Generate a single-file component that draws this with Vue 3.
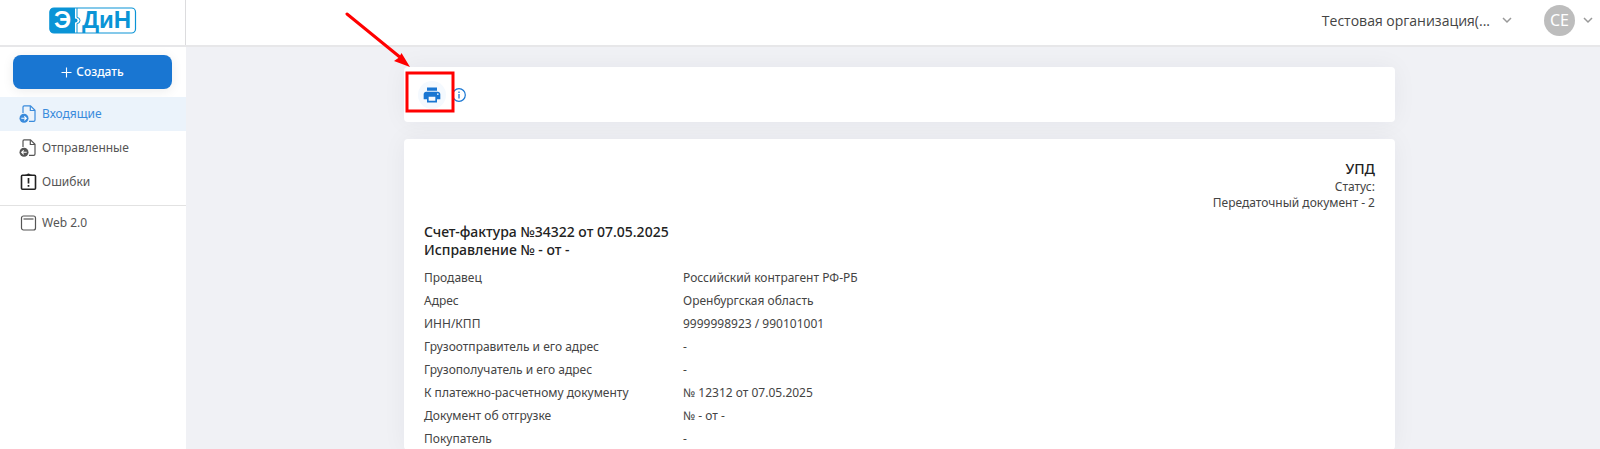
<script setup>
const navItems = [
  { label: 'Входящие', icon: 'in', active: true },
  { label: 'Отправленные', icon: 'out', active: false },
  { label: 'Ошибки', icon: 'error', active: false },
]

const rows = [
  ['Продавец', 'Российский контрагент РФ-РБ'],
  ['Адрес', 'Оренбургская область'],
  ['ИНН/КПП', '9999998923 / 990101001'],
  ['Грузоотправитель и его адрес', '-'],
  ['Грузополучатель и его адрес', '-'],
  ['К платежно-расчетному документу', '№ 12312 от 07.05.2025'],
  ['Документ об отгрузке', '№ - от -'],
  ['Покупатель', '-'],
]
</script>

<template>
  <div class="app">
    <header class="header">
      <a class="brand" href="#" aria-label="ЭДиН">
        <svg class="logo" width="88" height="28" viewBox="0 0 88 28">
          <rect x="1" y="1" width="85.5" height="25" rx="4" fill="#fff" stroke="#0a94d6" stroke-width="1.2" />
          <path d="M5 1H26V26H5A4.500 4.500 0 0 1 0.500 22V5A4.500 4.500 0 0 1 5 1Z" fill="#0a94d6" />
          <path d="M28 1V10.500A2.800 2.800 0 1 1 28 16.500V26" fill="none" stroke="#0a94d6" stroke-width="1" />
          <path d="M25.500 11.800A2 2 0 1 1 25.500 15.200Z" fill="#0a94d6" />
          <text x="5" y="21" class="logo-text" fill="#fff">Э</text>
          <text x="33" y="21" class="logo-text" fill="#0a94d6">ДиН</text>
        </svg>
      </a>
      <div class="account">
        <button class="org" type="button">
          <span>Тестовая организация(...</span>
          <svg width="10" height="7" viewBox="0 0 10 7"><path d="M1 1L5 5L9 1" class="chevron" /></svg>
        </button>
        <button class="user" type="button">
          <span class="avatar">CE</span>
          <svg width="10" height="7" viewBox="0 0 10 7"><path d="M1 1L5 5L9 1" class="chevron" /></svg>
        </button>
      </div>
    </header>

    <div class="body">
      <aside class="sidebar">
        <button class="create" type="button">
          <svg width="11" height="11" viewBox="0 0 11 11"><path d="M5.500 0.500V10.500M0.500 5.500H10.500" stroke="#fff" stroke-width="1.100" /></svg>
          <span>Создать</span>
        </button>
        <nav class="nav">
          <a v-for="item in navItems" :key="item.label" href="#" :class="['nav-item', { active: item.active }]">
            <svg v-if="item.icon === 'error'" class="dark" width="18" height="18" viewBox="0 0 18 18">
              <rect x="2.500" y="2.300" width="14" height="14" rx="1" fill="none" stroke="currentColor" stroke-width="1.600" />
              <path d="M6.500 3V1.500H8A1.600 1.600 0 0 1 11 1.500H12.500V3Z" fill="currentColor" />
              <path d="M9.500 5V10.500M9.500 12V13.700" stroke="currentColor" stroke-width="1.700" />
            </svg>
            <svg v-else width="18" height="18" viewBox="0 0 18 18">
              <path d="M4 8V2Q4 0.800 5.200 0.800H11.500L16 5.300V15Q16 16.300 14.700 16.300H10" fill="none" stroke="currentColor" stroke-width="1.200" />
              <path d="M11.300 1V5.500H16" fill="none" stroke="currentColor" stroke-width="1.200" />
              <circle cx="5" cy="13.300" r="4.500" fill="currentColor" />
              <path v-if="item.icon === 'in'" d="M2.300 13.300H7.300M5.300 11.300L7.300 13.300L5.300 15.300" fill="none" stroke="#fff" stroke-width="1.100" />
              <path v-else d="M7.700 13.300H2.700M4.700 11.300L2.700 13.300L4.700 15.300" fill="none" stroke="#fff" stroke-width="1.100" />
            </svg>
            <span>{{ item.label }}</span>
          </a>
        </nav>
        <nav class="nav secondary">
          <a href="#" class="nav-item">
            <svg width="18" height="18" viewBox="0 0 18 18">
              <rect x="2.500" y="2" width="14" height="14" rx="2" fill="none" stroke="currentColor" stroke-width="1.200" />
              <path d="M4.500 5H14.500" stroke="currentColor" stroke-width="1.200" />
            </svg>
            <span>Web 2.0</span>
          </a>
        </nav>
      </aside>

      <main class="main">
        <section class="card toolbar">
          <button class="tool print" type="button" aria-label="Печать">
            <svg width="20" height="20" viewBox="0 0 24 24">
              <path fill="#1976d2" d="M19 8H5c-1.660 0-3 1.340-3 3v6h4v4h12v-4h4v-6c0-1.660-1.340-3-3-3zm-3 11H8v-5h8v5zm3-7c-.55 0-1-.45-1-1s.45-1 1-1 1 .45 1 1-.45 1-1 1zm-1-9H6v4h12V3z" />
            </svg>
          </button>
          <button class="tool" type="button" aria-label="Информация">
            <svg width="14" height="14" viewBox="0 0 14 14">
              <circle cx="7" cy="7" r="6.300" fill="none" stroke="#1976d2" stroke-width="1.200" />
              <path d="M7 6V10.500M7 3.500V4.900" stroke="#1976d2" stroke-width="1.300" />
            </svg>
          </button>
          <svg class="pointer" width="120" height="106" viewBox="0 0 120 106">
            <rect x="62" y="62" width="46" height="38" fill="none" stroke="#f00" stroke-width="3" />
            <path d="M2 3L56 47" stroke="#f00" stroke-width="3" stroke-linecap="round" />
            <path d="M65 56L49 50L54 46.500L56.500 42Z" fill="#f00" />
          </svg>
        </section>

        <article class="card document">
          <div class="status">
            <strong>УПД</strong>
            <span>Статус:</span>
            <span>Передаточный документ - 2</span>
          </div>
          <h1>Счет-фактура №34322 от 07.05.2025<br />Исправление № - от -</h1>
          <table>
            <tbody>
              <tr v-for="row in rows" :key="row[0]">
                <th scope="row">{{ row[0] }}</th>
                <td>{{ row[1] }}</td>
              </tr>
            </tbody>
          </table>
        </article>
      </main>
    </div>
  </div>
</template>

<style>
body {
  overflow: hidden;
}
</style>

<style scoped>
.app {
  display: flex;
  flex-direction: column;
  height: 100vh;
  overflow: hidden;
  background: #f0f1f5;
  color: #444;
  font: 12px/16px "Noto Sans", "Open Sans", sans-serif;
}
button {
  display: flex;
  align-items: center;
  padding: 0;
  border: 0;
  background: none;
  color: inherit;
  font: inherit;
  cursor: pointer;
}
.header {
  display: flex;
  justify-content: space-between;
  height: 45px;
  flex: none;
  border-bottom: 2px solid #e7e7e9;
  background: #fff;
}
.brand {
  display: flex;
  box-sizing: border-box;
  width: 186px;
  padding: 7px 0 0 49px;
  border-right: 1px solid #dcdcde;
}
.logo-text {
  font: bold 24px "Liberation Sans", sans-serif;
}
.account {
  display: flex;
  align-items: center;
  gap: 32px;
  padding: 0 7px 4px 0;
}
.org {
  gap: 12px;
  font-family: "Open Sans", "Noto Sans", sans-serif;
  font-size: 14px;
}
.user {
  gap: 8px;
}
.avatar {
  width: 31px;
  border-radius: 50%;
  background: #bdbdbd;
  color: #fff;
  font-size: 16px;
  line-height: 31px;
  text-align: center;
}
.chevron {
  fill: none;
  stroke: #999;
  stroke-width: 1.5;
}
.body {
  display: flex;
  flex: 1;
  min-height: 0;
}
.sidebar {
  width: 186px;
  flex: none;
  background: #fff;
}
.create {
  justify-content: center;
  gap: 4px;
  width: 159px;
  height: 34px;
  margin: 8px 13px 8px;
  border-radius: 8px;
  background: #1976d2;
  box-shadow: 0 2px 12px rgba(0, 0, 0, 0.08);
  color: #fff;
  font-weight: 500;
}
.nav-item {
  display: flex;
  align-items: center;
  gap: 5px;
  height: 34px;
  padding-left: 19px;
  color: #555;
  font-size: 12px;
  text-decoration: none;
}
.nav-item.active {
  background: #ebf3fb;
  color: #3a8bdc;
}
.dark {
  color: #222;
}
.secondary {
  margin-top: 6px;
  border-top: 1px solid #e2e2e2;
}
.main {
  display: flex;
  flex: 1;
  flex-direction: column;
  align-items: center;
  gap: 17px;
  padding: 20px 0 0 13px;
}
.card {
  box-sizing: border-box;
  width: 100%;
  max-width: 991px;
  flex: none;
  border-radius: 4px;
  background: #fff;
  box-shadow: 0 0 24px rgba(30, 30, 50, 0.05);
}
.toolbar {
  position: relative;
  display: flex;
  align-items: center;
  gap: 6px;
  height: 55px;
  padding-left: 14px;
}
.print {
  justify-content: center;
  width: 28px;
  height: 28px;
  border-radius: 50%;
  background: #f4f9fe;
}
.pointer {
  position: absolute;
  top: -56px;
  left: -59px;
  pointer-events: none;
}
.document {
  padding: 20px 20px 0;
}
.status {
  display: flex;
  flex-direction: column;
  align-items: flex-end;
}
.status strong {
  color: #222;
  font-size: 14px;
  font-weight: 500;
  line-height: 20px;
}
h1 {
  margin: 12px 0 7px;
  color: #222;
  font-size: 14px;
  font-weight: 500;
  line-height: 18px;
}
table {
  width: 100%;
  border-collapse: collapse;
  table-layout: fixed;
}
th,
td {
  padding: 0;
  font-weight: 400;
  line-height: 23px;
  text-align: left;
}
th {
  width: 259px;
}
</style>
